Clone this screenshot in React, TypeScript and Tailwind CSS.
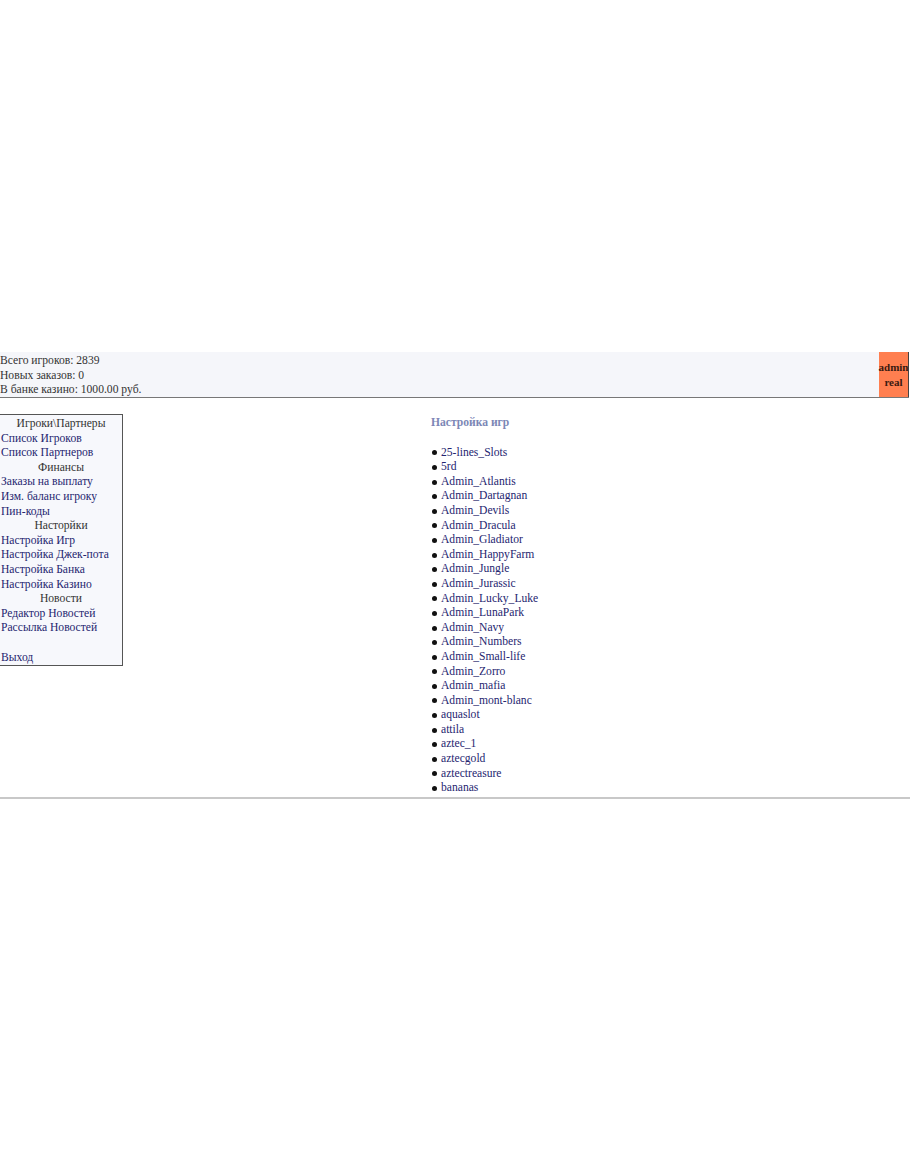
const games = [
  "25-lines_Slots",
  "5rd",
  "Admin_Atlantis",
  "Admin_Dartagnan",
  "Admin_Devils",
  "Admin_Dracula",
  "Admin_Gladiator",
  "Admin_HappyFarm",
  "Admin_Jungle",
  "Admin_Jurassic",
  "Admin_Lucky_Luke",
  "Admin_LunaPark",
  "Admin_Navy",
  "Admin_Numbers",
  "Admin_Small-life",
  "Admin_Zorro",
  "Admin_mafia",
  "Admin_mont-blanc",
  "aquaslot",
  "attila",
  "aztec_1",
  "aztecgold",
  "aztectreasure",
  "bananas",
];

type MenuItem = { title: string; links: string[] };

const menu: MenuItem[] = [
  { title: "Игроки\\Партнеры", links: ["Список Игроков", "Список Партнеров"] },
  { title: "Финансы", links: ["Заказы на выплату", "Изм. баланс игроку", "Пин-коды"] },
  {
    title: "Насторйки",
    links: ["Настройка Игр", "Настройка Джек-пота", "Настройка Банка", "Настройка Казино"],
  },
  { title: "Новости", links: ["Редактор Новостей", "Рассылка Новостей"] },
];

const Sidebar = () => (
  <div className="w-[123px] shrink-0 mt-[16px] self-start border border-[#555] border-l-0 bg-[#f7f8fc] pt-[2px]">
    {menu.map((m) => (
      <div key={m.title}>
        <div className="text-center text-[#333]">{m.title}</div>
        {m.links.map((l) => (
          <a key={l} href="#" className="block pl-[1px] text-[#25256f] whitespace-nowrap">
            {l}
          </a>
        ))}
      </div>
    ))}
    <div className="h-[14.6px]" />
    <a href="#" className="block pl-[1px] text-[#25256f]">
      Выход
    </a>
  </div>
);

export default function App() {
  return (
    <div
      className="w-[910px] min-h-[1155px] bg-white text-[11.6px] leading-[14.6px] text-[#333]"
      style={{ fontFamily: '"Liberation Serif", "Times New Roman", serif' }}
    >
      <div className="h-[352px]" />

      {/* Header */}
      <div className="w-[909px] h-[46px] flex justify-between bg-[#f5f6fa] border-b border-[#777]">
        <div className="pt-[2px]">
          <div>Всего игроков: 2839</div>
          <div>Новых заказов: 0</div>
          <div>В банке казино: 1000.00 руб.</div>
        </div>
        <div className="w-[30px] bg-[#ff7f50] border-r border-[#444] flex flex-col items-center justify-center font-bold text-[#3a1a10] text-[11px] leading-[15px]">
          <span>admin</span>
          <span>real</span>
        </div>
      </div>

      {/* Body */}
      <div className="h-[401px] overflow-hidden flex border-b-2 border-[#c8c8c8]">
        <Sidebar />
        <div className="pl-[308px] pt-[18px]">
          <div className="font-bold text-[#7c87b6]">Настройка игр</div>
          <ul className="mt-[15px] pl-[1px]">
            {games.map((g) => (
              <li key={g} className="flex items-center gap-[4px]">
                <span className="w-[5px] h-[5px] rounded-full bg-[#111]" />
                <a href="#" className="text-[#25256f]">
                  {g}
                </a>
              </li>
            ))}
          </ul>
        </div>
      </div>
    </div>
  );
}
